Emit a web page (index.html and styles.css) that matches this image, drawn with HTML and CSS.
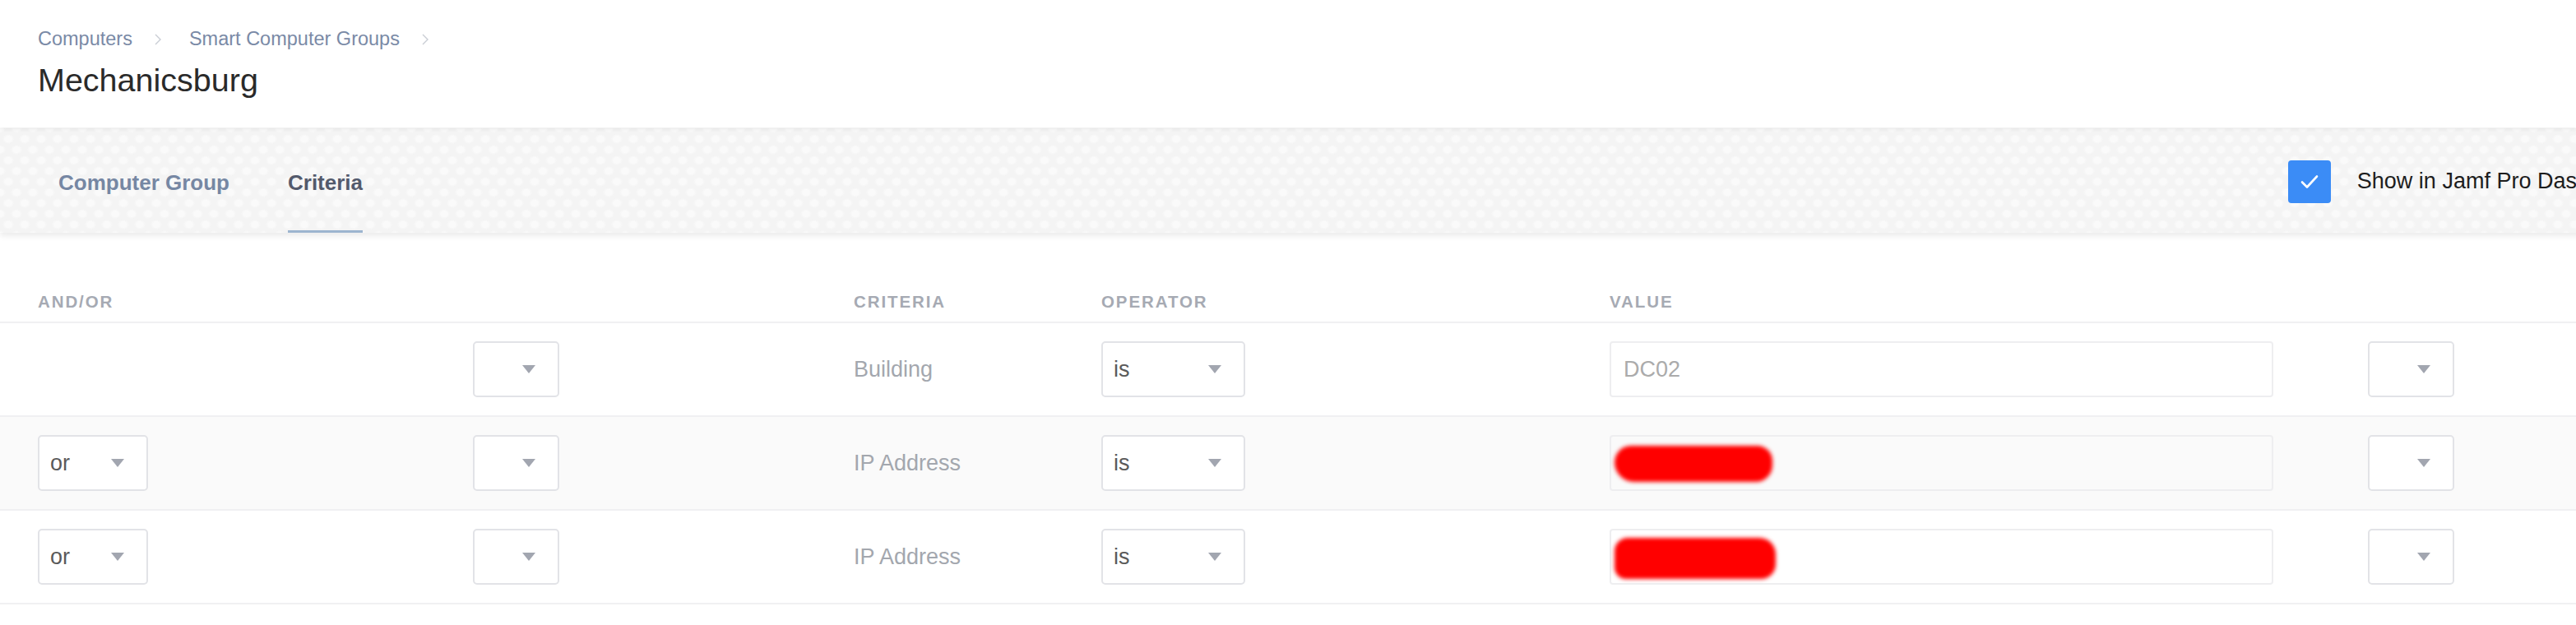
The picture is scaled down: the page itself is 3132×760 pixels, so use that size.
FILE: index.html
```html
<!DOCTYPE html>
<html>
<head>
<meta charset="utf-8">
<link rel="stylesheet" href="styles.css">
</head>
<body>
<header class="page-header">
  <nav class="crumbs">
    <a class="crumb">Computers</a>
    <svg class="chev" viewBox="0 0 8 14" width="8" height="14"><path d="M1 1 L7 7 L1 13" fill="none" stroke="#c9cdd4" stroke-width="1.4"/></svg>
    <a class="crumb">Smart Computer Groups</a>
    <svg class="chev" viewBox="0 0 8 14" width="8" height="14"><path d="M1 1 L7 7 L1 13" fill="none" stroke="#c9cdd4" stroke-width="1.4"/></svg>
  </nav>
  <h1 class="title">Mechanicsburg</h1>
</header>

<div class="tabbar">
  <div class="tabs">
    <div class="tab">Computer Group</div>
    <div class="tab active">Criteria</div>
  </div>
  <label class="dash">
    <span class="checkbox">
      <svg viewBox="0 0 52 52" width="52" height="52"><path d="M17 26.5 L23 32.5 L35 19.5" fill="none" stroke="#fff" stroke-width="2.6" stroke-linecap="round" stroke-linejoin="round"/></svg>
    </span>
    <span class="dash-label">Show in Jamf Pro Dashboard</span>
  </label>
</div>

<section class="criteria">
  <div class="row head">
    <div class="th">AND/OR</div>
    <div class="th"></div>
    <div class="th">CRITERIA</div>
    <div class="th">OPERATOR</div>
    <div class="th">VALUE</div>
    <div class="th"></div>
  </div>

  <div class="row">
    <div class="cell"></div>
    <div class="cell"><div class="select paren"><span class="arrow"></span></div></div>
    <div class="cell name">Building</div>
    <div class="cell"><div class="select op"><span class="sel-text">is</span><span class="arrow"></span></div></div>
    <div class="cell"><div class="input"><span class="value-text">DC02</span></div></div>
    <div class="cell"><div class="select paren"><span class="arrow"></span></div></div>
  </div>

  <div class="row alt">
    <div class="cell"><div class="select andor"><span class="sel-text">or</span><span class="arrow"></span></div></div>
    <div class="cell"><div class="select paren"><span class="arrow"></span></div></div>
    <div class="cell name">IP Address</div>
    <div class="cell"><div class="select op"><span class="sel-text">is</span><span class="arrow"></span></div></div>
    <div class="cell"><div class="input"><span class="redact"></span></div></div>
    <div class="cell"><div class="select paren"><span class="arrow"></span></div></div>
  </div>

  <div class="row">
    <div class="cell"><div class="select andor"><span class="sel-text">or</span><span class="arrow"></span></div></div>
    <div class="cell"><div class="select paren"><span class="arrow"></span></div></div>
    <div class="cell name">IP Address</div>
    <div class="cell"><div class="select op"><span class="sel-text">is</span><span class="arrow"></span></div></div>
    <div class="cell"><div class="input"><span class="redact redact2"></span></div></div>
    <div class="cell"><div class="select paren"><span class="arrow"></span></div></div>
  </div>
</section>
</body>
</html>
```

FILE: styles.css
```css
html, body {
  margin: 0;
  padding: 0;
}
body {
  width: 3132px;
  overflow: hidden;
  background: #ffffff;
  font-family: "Liberation Sans", Arial, sans-serif;
  color: #333;
}

/* Header */
.page-header {
  position: relative;
  z-index: 2;
  background: #fff;
  padding: 33px 46px 35px;
  box-shadow: 0 2px 5px rgba(0, 0, 0, 0.07);
}
.crumbs {
  display: flex;
  align-items: center;
  height: 28px;
  font-size: 23.5px;
  line-height: 28px;
}
.crumb {
  color: #7a8aa6;
}
.chev {
  margin: 1px 34px 0 27px;
}
.title {
  margin: 13px 0 0;
  font-size: 39.5px;
  line-height: 46px;
  font-weight: normal;
  color: #2a2a2a;
}

/* Tab bar */
.tabbar {
  position: relative;
  z-index: 1;
  width: 3263px;
  box-sizing: border-box;
  height: 127px;
  margin-top: 1px;
  padding: 0 46px 0 71px;
  display: flex;
  align-items: stretch;
  background-color: #f4f4f4;
  background-image:
    radial-gradient(ellipse 7px 6px at 50% 50%, #fafafa 0 4px, rgba(250,250,250,0) 7px),
    radial-gradient(ellipse 7px 6px at 50% 50%, #fafafa 0 4px, rgba(250,250,250,0) 7px);
  background-size: 20px 26px, 20px 26px;
  background-position: 0 0, 10px 13px;
  box-shadow: 0 4px 7px rgba(0, 0, 0, 0.08);
}
.tabs {
  display: flex;
  gap: 71px;
}
.tab {
  display: flex;
  align-items: center;
  padding-top: 8px;
  border-bottom: 3px solid transparent;
  font-size: 26px;
  font-weight: bold;
  color: #7687a3;
}
.tab.active {
  color: #535a6c;
  border-bottom-color: #9db5cf;
}
.dash {
  margin-left: auto;
  display: flex;
  align-items: center;
  gap: 32px;
  padding-top: 2px;
}
.checkbox {
  width: 52px;
  height: 52px;
  border-radius: 4px;
  background: #3b8cf6;
  display: block;
}
.checkbox svg {
  display: block;
}
.dash-label {
  font-size: 27px;
  color: #1d1d1d;
  white-space: nowrap;
}

/* Criteria table */
.criteria {
  margin-top: 57px;
}
.row {
  display: grid;
  grid-template-columns: 529px 463px 301px 618px 922px 1fr;
  padding-left: 46px;
  align-items: center;
  height: 112px;
  border-bottom: 2px solid #f0f0f2;
}
.row.head {
  height: 51px;
}
.row.alt {
  background: #fafafa;
}
.th {
  font-size: 20.5px;
  font-weight: bold;
  letter-spacing: 1.9px;
  color: #a6aab3;
  padding-top: 2px;
}
.cell {
  display: flex;
  align-items: center;
}
.name {
  font-size: 27px;
  color: #a3a7ae;
}
.select {
  position: relative;
  box-sizing: border-box;
  height: 68px;
  border: 2px solid #e2e3e7;
  border-radius: 5px;
  background: #fff;
  display: flex;
  align-items: center;
}
.select.andor { width: 134px; }
.select.paren { width: 105px; }
.select.op { width: 175px; }
.sel-text {
  padding-left: 13px;
  font-size: 27px;
  color: #5a5a5a;
}
.arrow {
  position: absolute;
  right: 27px;
  top: 50%;
  margin-top: -5px;
  width: 0;
  height: 0;
  border-left: 8px solid transparent;
  border-right: 8px solid transparent;
  border-top: 10px solid #a2a6b0;
}
.input {
  box-sizing: border-box;
  width: 807px;
  height: 68px;
  border: 2px solid #eeeef0;
  border-radius: 4px;
  display: flex;
  align-items: center;
  padding-left: 15px;
}
.value-text {
  font-size: 27px;
  color: #ababab;
}
.redact {
  display: block;
  width: 192px;
  height: 44px;
  margin-left: -11px;
  margin-top: 2px;
  background: #ff0000;
  border-radius: 22px 20px 22px 26px;
  filter: blur(2.5px);
}
.redact2 {
  width: 196px;
  height: 50px;
  margin-top: 3px;
  border-radius: 16px 20px 18px 14px;
}
```
